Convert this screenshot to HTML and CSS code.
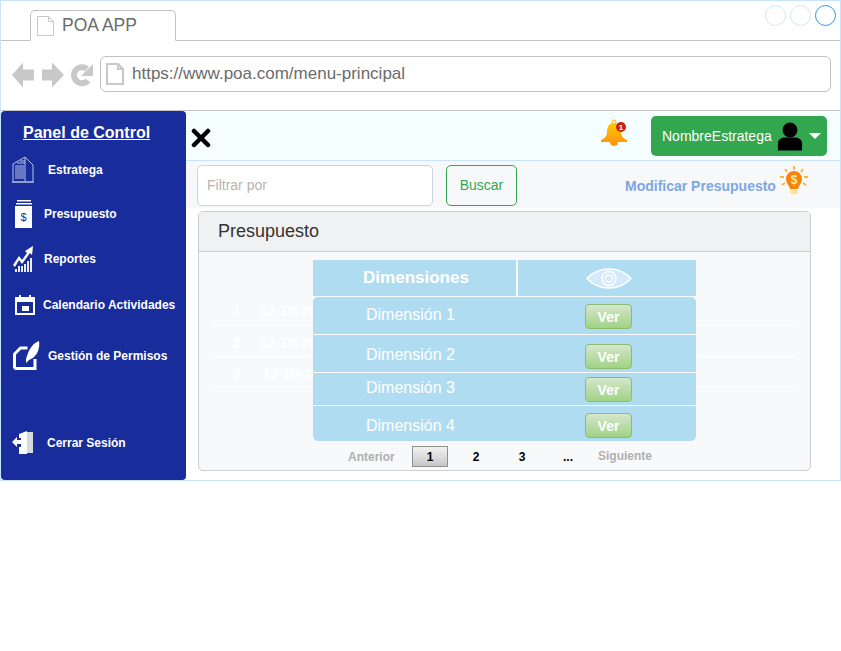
FILE: index.html
```html
<!DOCTYPE html>
<html lang="es">
<head>
    <meta charset="UTF-8">
    <meta name="viewport" content="width=device-width, initial-scale=1.0">
    <title>POA APP</title>
    <link rel="stylesheet" href="styles.css">
</head>
<body>
<div class="browser">
    <div class="tab-bar">
        <div class="tab">
            <svg class="page-icon" width="17" height="20" viewBox="0 0 17 20"><path d="M.5.5h11l5 5v14H.5zM11.500.5v5h5" fill="#fff" stroke="#c8c8c8"/></svg>
            <span>POA APP</span>
        </div>
        <div class="win-controls">
            <span class="win-dot"></span>
            <span class="win-dot"></span>
            <span class="win-dot active"></span>
        </div>
    </div>
    <div class="url-bar">
        <svg class="nav-icons" width="84" height="28" viewBox="0 0 84 28">
            <path d="M1 14 12 1.500v7h11v11H12v7z" fill="#c8c8c8"/>
            <path d="M53 14 41 1.500v7H31v11h10v7z" fill="#c8c8c8"/>
            <path d="M77 19.500A8 8 0 1 1 76 8" fill="none" stroke="#c8c8c8" stroke-width="6"/>
            <path d="M82 3v12H70z" fill="#c8c8c8"/>
        </svg>
        <div class="url-field">
            <svg class="page-icon" width="18" height="22" viewBox="0 0 18 22"><path d="M1 1h11l5 5v15H1zM12 1v5h5" fill="#fff" stroke="#c8c8c8" stroke-width="2"/></svg>
            <span>https://www.poa.com/menu-principal</span>
        </div>
    </div>

    <div class="app">
        <nav class="sidebar">
            <h2 class="panel-title">Panel de Control</h2>
            <a class="side-item item-estratega">
                <svg width="22" height="27" viewBox="0 0 22 27"><path d="M1 25V8L13 1l8 8v16" fill="none" stroke="#b9c2e6"/><path d="M3 10h9M3 12h9M3 14h9M3 16h9M3 18h9M3 20h9M3 22h9M5 7h8M8 5h5" stroke="#b9c2e6"/><path d="M13 2v23" stroke="#b9c2e6"/><path d="M0 26h22" stroke="#b9c2e6" stroke-width="1.500"/></svg>
                <span>Estratega</span>
            </a>
            <a class="side-item item-presupuesto">
                <svg width="18" height="28" viewBox="0 0 18 28"><path d="M2 0h14v1.500H2zM1 3h16v1.500H1z" fill="#fff"/><path d="M0 6h17v22H0z" fill="#fff"/><text x="8.500" y="21" class="dollar-text">$</text></svg>
                <span>Presupuesto</span>
            </a>
            <a class="side-item item-reportes">
                <svg width="21" height="28" viewBox="0 0 21 28"><path d="M0 20l6-9 3 4 5-7-2-2 8-5-1 9-2-2-8 11-3-4-4 7z" fill="#fff"/><path d="M3 27v-3M6 27v-6M9 27v-6M12 27v-8M15 27v-11M18 27V13" stroke="#fff" stroke-width="1.800"/></svg>
                <span>Reportes</span>
            </a>
            <a class="side-item item-calendario">
                <svg width="20" height="20" viewBox="0 0 20 20"><path d="M5 0v3M15 0v3" stroke="#fff" stroke-width="2"/><path d="M1 3h18v16H1z" fill="none" stroke="#fff" stroke-width="2"/><path d="M1 3h18v4H1z" fill="#fff"/><path d="M7 11h7v5H7z" fill="#fff"/></svg>
                <span>Calendario Actividades</span>
            </a>
            <a class="side-item item-permisos">
                <svg width="27" height="29" viewBox="0 0 27 29"><path d="M1.500 27.500V13l6-6h7M22 18v9.500H1.500" fill="none" stroke="#fff" stroke-width="3"/><path d="M26 0c1 6-1 13-6 17l-4 2-3 3 0-4 1-3c2-7 6-13 12-15z" fill="#fff"/></svg>
                <span>Gestión de Permisos</span>
            </a>
            <a class="side-item item-cerrar">
                <svg width="22" height="23" viewBox="0 0 22 23"><path d="M7 3l8-3v23H7v-7h2V7H7z" fill="#fff"/><path d="M15 1h6v21h-6z" fill="#d6d9de"/><path d="M0 11l5-5v3h6v4H5v3z" fill="#fff"/></svg>
                <span>Cerrar Sesión</span>
            </a>
        </nav>

        <main class="content">
            <div class="top-bar">
                <svg class="close-icon" width="20" height="20" viewBox="0 0 20 20"><path d="M3 3l14 14M17 3 3 17" stroke="#000" stroke-width="4.500" stroke-linecap="round"/></svg>
                <div class="bell">
                    <svg width="28" height="28" viewBox="0 0 28 28">
                        <defs><linearGradient id="bellFill" x1="0" y1="0" x2="0" y2="1"><stop offset="0" stop-color="#ffc800"/><stop offset="1" stop-color="#ff9a10"/></linearGradient></defs>
                        <circle cx="14" cy="3" r="2" fill="none" stroke="#ffb300"/>
                        <path d="M14 4c-5 0-7 4-7 9 0 4-2 6-6 8v2h26v-2c-4-2-6-4-6-8 0-5-2-9-7-9z" fill="url(#bellFill)"/>
                        <path d="M10 23h8a4 4 0 0 1-8 0z" fill="#ff9a10"/>
                        <circle cx="21" cy="8" r="5" fill="#c4260c"/>
                        <text x="21" y="11" class="bell-count">1</text>
                    </svg>
                </div>
                <button class="user-btn">
                    <span>NombreEstratega</span>
                    <svg width="26" height="29" viewBox="0 0 28 30"><circle cx="14" cy="8" r="8"/><path d="M1 30V22c0-4 4-6 8-6h10c4 0 8 2 8 6v8z"/></svg>
                    <i class="caret"></i>
                </button>
            </div>

            <div class="filter-row">
                <input class="filter-input" type="text" placeholder="Filtrar por">
                <button class="search-btn">Buscar</button>
                <a class="modify-link">Modificar Presupuesto</a>
                <svg class="bulb" width="28" height="32" viewBox="0 0 28 32">
                    <path d="M14 1v4M5 4l2 3M23 4l-2 3M0 12h4M24 12h4M2 20l3-2M26 20l-3-2" stroke="#ffb52e" stroke-width="1.800"/>
                    <path d="M14 6c-5 0-8 4-8 8 0 4 3 6 4 10h8c1-4 4-6 4-10 0-4-3-8-8-8z" fill="#f9820f"/>
                    <path d="M10 25h8v2c0 3-8 3-8 0z" fill="#ffdf9b"/>
                    <text x="14" y="19" class="bulb-sign">$</text>
                </svg>
            </div>

            <section class="card">
                <header class="card-head">Presupuesto</header>
                <div class="card-body">
                    <div class="ghost-rows">
                        <div class="ghost-row row-one"><b>1</b><b>12-10-2020</b></div>
                        <div class="ghost-row row-two"><b>2</b><b>12-10-2020</b></div>
                        <div class="ghost-row row-three"><b>3</b><b>12-10-2020</b></div>
                    </div>
                    <div class="dim-table">
                        <div class="dim-head">
                            <div class="dim-title">Dimensiones</div>
                            <div class="dim-eye">
                                <svg width="46" height="21" viewBox="0 0 46 21"><path d="M1 10.500C7 4 14 1 23 1s16 3 22 9.500C39 17 32 20 23 20S7 17 1 10.500z" fill="#d4e9fd" stroke="#fff" stroke-width="1.500"/><circle cx="23" cy="10.500" r="7" fill="none" stroke="#fff" stroke-width="1.500"/><circle cx="23" cy="10.500" r="3.500" fill="none" stroke="#fff" stroke-width="1.500"/></svg>
                            </div>
                        </div>
                        <div class="dim-rows">
                            <div class="dim-row row-a"><span>Dimensión 1</span><button class="ver-btn">Ver</button></div>
                            <div class="dim-row row-b"><span>Dimensión 2</span><button class="ver-btn">Ver</button></div>
                            <div class="dim-row row-c"><span>Dimensión 3</span><button class="ver-btn">Ver</button></div>
                            <div class="dim-row row-d"><span>Dimensión 4</span><button class="ver-btn">Ver</button></div>
                        </div>
                    </div>
                    <div class="pager">
                        <span class="pg-off pg-prev">Anterior</span>
                        <span class="pg-current">1</span>
                        <span class="pg-num">2</span>
                        <span class="pg-num">3</span>
                        <span class="pg-num">...</span>
                        <span class="pg-off pg-next">Siguiente</span>
                    </div>
                </div>
            </section>
        </main>
    </div>
</div>
</body>
</html>
```

FILE: styles.css
```css
* {
    box-sizing: border-box;
}
body {
    margin: 0;
    background-color: #fff;
    font-family: "Liberation Sans", Arial, sans-serif;
}
.browser {
    width: 841px;
    height: 481px;
    border: 1px solid #c9e3fb;
}
.tab-bar {
    height: 40px;
    border-bottom: 1px solid #c2c2c2;
    display: flex;
    justify-content: space-between;
    padding-left: 29px;
}
.tab {
    width: 146px;
    height: 31px;
    margin-top: 9px;
    border: 1px solid #c2c2c2;
    border-bottom: 1px solid #fff;
    border-radius: 5px 5px 0 0;
    background-color: #fff;
    display: flex;
    align-items: center;
    padding-left: 6px;
    gap: 8px;
    font-size: 17.500px;
    color: #6b6b6b;
}
.win-controls {
    display: flex;
    gap: 4px;
    padding: 4px 4px 0 0;
}
.win-dot {
    width: 21px;
    height: 21px;
    border: 1px solid #cfe6fb;
    border-radius: 50%;
}
.win-dot.active {
    border-color: #2f93ea;
}
.url-bar {
    height: 70px;
    border-bottom: 1px solid #c2c2c2;
    display: flex;
    align-items: center;
    padding: 0 9px 0 10px;
    gap: 5px;
}
.nav-icons {
    flex: none;
    margin-top: -1px;
}
.url-field {
    flex: 1;
    height: 36px;
    margin-top: -4px;
    border: 1px solid #c2c2c2;
    border-radius: 6px;
    display: flex;
    align-items: center;
    padding-left: 5px;
    gap: 8px;
    font-size: 17px;
    color: #6b6b6b;
}
.app {
    display: flex;
    height: 369px;
}
.sidebar {
    width: 185px;
    flex: none;
    background-color: #182c9b;
    border-radius: 4px;
    color: #fff;
    padding-top: 13px;
}
.panel-title {
    margin: 0 0 0 22px;
    font-size: 16px;
    line-height: 18px;
    font-weight: bold;
    text-decoration: underline;
}
.side-item {
    display: flex;
    align-items: center;
    font-size: 12px;
    font-weight: bold;
}
.item-estratega {
    margin: 14px 0 0 11px;
    gap: 14px;
}
.item-presupuesto {
    margin: 17px 0 0 14px;
    gap: 11px;
}
.item-reportes {
    margin: 17px 0 0 12px;
    gap: 10px;
}
.item-calendario {
    margin: 22px 0 0 14px;
    gap: 8px;
}
.item-permisos {
    margin: 26px 0 0 12px;
    gap: 8px;
}
.item-cerrar {
    margin: 61px 0 0 11px;
    gap: 13px;
}
.dollar-text {
    font-size: 11px;
    font-weight: normal;
    text-anchor: middle;
    fill: #182c9b;
}
.content {
    flex: 1;
    min-width: 0;
}
.top-bar {
    height: 50px;
    background-color: #f5ffff;
    border-bottom: 1px solid #c9e3fb;
    display: flex;
    align-items: center;
    padding: 0 13px 0 5px;
}
.close-icon {
    margin-top: 4px;
}
.bell {
    margin-left: auto;
    height: 28px;
    margin-top: -6px;
}
.bell-count {
    font-size: 8px;
    font-weight: bold;
    fill: #fff;
    text-anchor: middle;
}
.user-btn {
    margin-left: 23px;
    width: 176px;
    height: 40px;
    margin-top: 1px;
    border: none;
    border-radius: 5px;
    background-color: #33a650;
    color: #fff;
    display: flex;
    align-items: center;
    padding: 0 0 0 11px;
    font-family: inherit;
    font-size: 14px;
    gap: 5px;
}
.caret {
    width: 0;
    height: 0;
    margin-left: 1px;
    border-left: 6px solid transparent;
    border-right: 6px solid transparent;
    border-top: 6px solid #fff;
}
.filter-row {
    height: 47px;
    background-color: #f6f8fa;
    display: flex;
    align-items: center;
    padding: 0 0 0 11px;
}
.filter-input {
    width: 236px;
    height: 41px;
    margin-top: 1px;
    border: 1px solid #ced4da;
    border-radius: 5px;
    padding: 0 9px;
    font-family: inherit;
    font-size: 14px;
    background-color: #fff;
}
.filter-input::placeholder {
    color: #b4b4b4;
}
.search-btn {
    width: 71px;
    height: 41px;
    margin: 1px 0 0 13px;
    border: 1px solid #33a650;
    border-radius: 5px;
    background: transparent;
    color: #33a650;
    font-family: inherit;
    font-size: 14px;
}
.modify-link {
    margin: 2px 0 0 108px;
    font-size: 14px;
    font-weight: bold;
    color: #7ea7e2;
}
.bulb {
    margin: -8px 0 0 4px;
}
.bulb-sign {
    font-size: 12px;
    font-weight: bold;
    fill: #ffe9a8;
    text-anchor: middle;
}
.card {
    width: 613px;
    height: 260px;
    margin: 3px 0 0 12px;
    border: 1px solid #cdcdcd;
    border-radius: 5px;
    background-color: #f8f9fb;
    overflow: hidden;
}
.card-head {
    height: 40px;
    background-color: #f0f1f3;
    border-bottom: 1px solid #cdcdcd;
    padding: 9px 19px;
    font-size: 18px;
    line-height: 20px;
    color: #333;
}
.card-body {
    position: relative;
    padding: 8px 0 0 114px;
}
.ghost-rows {
    position: absolute;
    left: 13px;
    right: 15px;
    top: 42px;
    color: #fff;
    font-size: 14px;
}
.ghost-row {
    height: 32px;
    border-bottom: 1px solid #fff;
    padding: 9px 0 0 21px;
    display: flex;
    gap: 19px;
    white-space: nowrap;
}
.row-two {
    height: 31px;
    margin-left: 2px;
    padding-left: 19px;
}
.row-three {
    height: 30px;
    margin-left: 2px;
    padding-left: 19px;
    gap: 22px;
}
.dim-table {
    position: relative;
    width: 383px;
}
.dim-head {
    display: flex;
    height: 36px;
    background-color: #b0dcf1;
    color: #fff;
    font-weight: bold;
    font-size: 17px;
}
.dim-title {
    width: 205px;
    border-right: 2px solid #f4fbff;
    display: flex;
    align-items: center;
    justify-content: center;
    padding-left: 3px;
}
.dim-eye {
    flex: 1;
    display: flex;
    align-items: center;
    justify-content: center;
    padding-left: 3px;
}
.dim-rows {
    margin-top: 1px;
    border-radius: 5px;
    overflow: hidden;
    display: flex;
    flex-direction: column;
    gap: 1px;
}
.dim-row {
    background-color: #b0dcf1;
    color: #fff;
    font-size: 16px;
    display: flex;
    justify-content: space-between;
    padding: 0 64px 0 53px;
}
.row-a {
    height: 37px;
    padding-top: 9px;
}
.row-b {
    height: 37px;
    padding-top: 11px;
}
.row-c {
    height: 32px;
    padding-top: 6px;
}
.row-d {
    height: 35px;
    padding-top: 11px;
}
.ver-btn {
    width: 47px;
    height: 25px;
    border: 1px solid #8dbc71;
    border-radius: 4px;
    background: linear-gradient(#d5e6cc, #a0d384);
    color: #fff;
    font-family: inherit;
    font-size: 14px;
    font-weight: bold;
    padding: 0;
}
.row-a .ver-btn {
    margin-top: -2px;
}
.row-b .ver-btn {
    margin-top: -2px;
}
.row-c .ver-btn {
    margin-top: -2px;
}
.row-d .ver-btn {
    margin-top: -4px;
}
.pager {
    display: flex;
    align-items: center;
    height: 21px;
    margin: 5px 0 0 35px;
    font-size: 12px;
    font-weight: bold;
    color: #000;
}
.pg-off {
    color: #b0b0b0;
}
.pg-prev {
    width: 64px;
    margin-top: 1px;
}
.pg-current {
    width: 36px;
    height: 21px;
    border: 1px solid #8f8f8f;
    background: linear-gradient(#f2f2f2, #c6c6c6);
    text-align: center;
    line-height: 21px;
}
.pg-num {
    width: 46px;
    text-align: center;
    margin-left: 5px;
    margin-right: -5px;
    margin-top: 1px;
}
.pg-next {
    margin-left: 12px;
    margin-top: -2px;
}
```
